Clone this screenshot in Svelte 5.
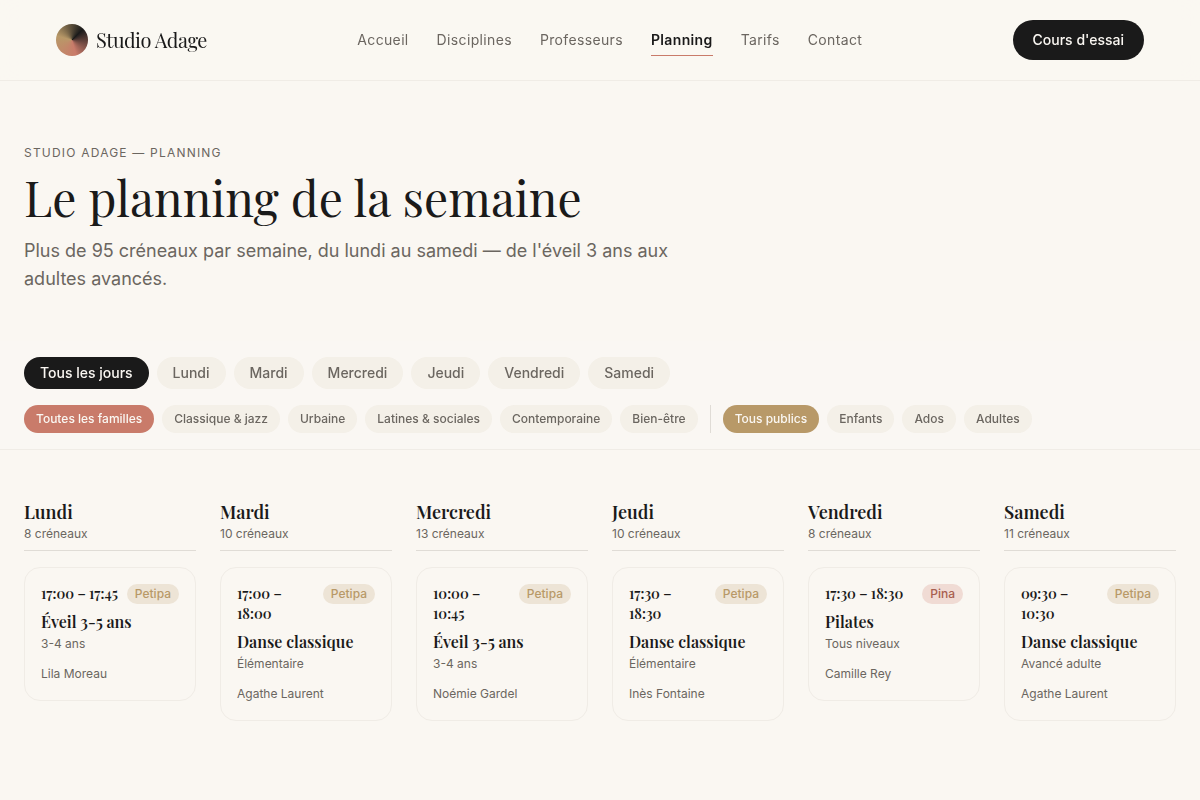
<script>
    const links = ['Accueil', 'Disciplines', 'Professeurs', 'Planning', 'Tarifs', 'Contact'];
    const jours = ['Tous les jours', 'Lundi', 'Mardi', 'Mercredi', 'Jeudi', 'Vendredi', 'Samedi'];
    const familles = ['Toutes les familles', 'Classique & jazz', 'Urbaine', 'Latines & sociales', 'Contemporaine', 'Bien-être'];
    const publics = ['Tous publics', 'Enfants', 'Ados', 'Adultes'];

    const planning = [
        { jour: 'Lundi', total: 8, debut: '17:00', fin: '17:45', salle: 'Petipa', cours: 'Éveil 3-5 ans', niveau: '3-4 ans', prof: 'Lila Moreau' },
        { jour: 'Mardi', total: 10, debut: '17:00', fin: '18:00', salle: 'Petipa', cours: 'Danse classique', niveau: 'Élémentaire', prof: 'Agathe Laurent' },
        { jour: 'Mercredi', total: 13, debut: '10:00', fin: '10:45', salle: 'Petipa', cours: 'Éveil 3-5 ans', niveau: '3-4 ans', prof: 'Noémie Gardel' },
        { jour: 'Jeudi', total: 10, debut: '17:30', fin: '18:30', salle: 'Petipa', cours: 'Danse classique', niveau: 'Élémentaire', prof: 'Inès Fontaine' },
        { jour: 'Vendredi', total: 8, debut: '17:30', fin: '18:30', salle: 'Pina', cours: 'Pilates', niveau: 'Tous niveaux', prof: 'Camille Rey' },
        { jour: 'Samedi', total: 11, debut: '09:30', fin: '10:30', salle: 'Petipa', cours: 'Danse classique', niveau: 'Avancé adulte', prof: 'Agathe Laurent' }
    ];

    let jour = $state(jours[0]);
    let famille = $state(familles[0]);
    let pub = $state(publics[0]);
    let visibles = $derived(planning.filter((p) => jour === jours[0] || p.jour === jour));
</script>

<header class="topbar">
    <a class="brand" href="#accueil">
        <span class="logo"></span>
        <span class="name">Studio Adage</span>
    </a>
    <nav>
        {#each links as link}
            <a href="#{link.toLowerCase()}" class:active={link === 'Planning'}>{link}</a>
        {/each}
    </nav>
    <a class="cta" href="#essai">Cours d'essai</a>
</header>

<main>
    <section class="hero">
        <p class="eyebrow">Studio Adage — Planning</p>
        <h1>Le planning de la semaine</h1>
        <p class="lead">Plus de 95 créneaux par semaine, du lundi au samedi — de l'éveil 3 ans aux adultes avancés.</p>
    </section>

    <section class="filters">
        <div class="row">
            {#each jours as j}
                <button class="pill" class:dark={j === jour} onclick={() => (jour = j)}>{j}</button>
            {/each}
        </div>
        <div class="row">
            {#each familles as f}
                <button class="pill small" class:rose={f === famille} onclick={() => (famille = f)}>{f}</button>
            {/each}
            <span class="sep"></span>
            {#each publics as p}
                <button class="pill small" class:gold={p === pub} onclick={() => (pub = p)}>{p}</button>
            {/each}
        </div>
    </section>

    <section class="week">
        {#each visibles as p (p.jour)}
            <div class="day">
                <div class="day-head">
                    <h2>{p.jour}</h2>
                    <p>{p.total} créneaux</p>
                </div>
                <article class="card">
                    <div class="top">
                        <span class="time">{p.debut} – {p.fin}</span>
                        <span class="room" class:pina={p.salle === 'Pina'}>{p.salle}</span>
                    </div>
                    <h3>{p.cours}</h3>
                    <p class="level">{p.niveau}</p>
                    <p class="teacher">{p.prof}</p>
                </article>
            </div>
        {/each}
    </section>
</main>

<style>
    :global(body) {
        margin: 0;
        background: #faf7f2;
        color: #1a1a1a;
        font-family: Inter, "Liberation Sans", sans-serif;
    }

    p, h1, h2, h3 {
        margin: 0;
    }

    a {
        color: inherit;
        text-decoration: none;
    }

    .topbar {
        display: flex;
        align-items: center;
        justify-content: space-between;
        height: 80px;
        padding: 0 56px;
        border-bottom: 1px solid #f0ece6;
        background: rgba(250, 247, 242, 0.9);
        backdrop-filter: blur(12px);
    }

    .brand {
        display: flex;
        align-items: center;
        gap: 8px;
    }

    .logo {
        width: 32px;
        height: 32px;
        border-radius: 50%;
        background: conic-gradient(from 45deg, #1a1a1a, #c97b6a, #b89968, #1a1a1a);
    }

    .name {
        font-family: "Playfair Display", "Liberation Serif", serif;
        font-size: 20px;
        line-height: 28px;
        letter-spacing: -0.5px;
    }

    nav {
        display: flex;
        gap: 28px;
        font-size: 14px;
        line-height: 20px;
        letter-spacing: 0.35px;
        color: #6b6660;
    }

    nav a {
        padding: 5px 0;
        border-bottom: 1px solid transparent;
    }

    nav a.active {
        color: #1a1a1a;
        font-weight: 600;
        border-color: #c97b6a;
    }

    .cta {
        padding: 10px 20px;
        border-radius: 20px;
        background: #1a1a1a;
        color: #faf7f2;
        font-size: 14px;
        line-height: 20px;
        font-weight: 500;
    }

    .hero {
        padding: 64px 24px 48px;
    }

    .eyebrow {
        font-size: 12px;
        line-height: 16px;
        letter-spacing: 1.2px;
        text-transform: uppercase;
        color: #6b6660;
    }

    h1 {
        margin: 8px 0 12px;
        font-family: "Playfair Display", "Liberation Serif", serif;
        font-size: 48px;
        line-height: 56px;
        font-weight: 400;
    }

    .lead {
        max-width: 672px;
        font-size: 18px;
        line-height: 28px;
        color: #6b6660;
    }

    .filters {
        display: flex;
        flex-direction: column;
        gap: 16px;
        padding: 16px 24px;
        border-bottom: 1px solid #f0ece6;
        background: rgba(250, 247, 242, 0.95);
        backdrop-filter: blur(8px);
    }

    .row {
        display: flex;
        gap: 8px;
    }

    .pill {
        height: 32px;
        padding: 6px 16px;
        border: 0;
        border-radius: 16px;
        background: #f4f0e8;
        color: #6b6660;
        font-family: inherit;
        font-size: 14px;
        line-height: 20px;
        font-weight: 500;
        white-space: nowrap;
        cursor: pointer;
    }

    .pill.small {
        height: 28px;
        padding: 6px 12px;
        font-size: 12px;
        line-height: 16px;
    }

    .pill.dark {
        background: #1a1a1a;
        color: #faf7f2;
    }

    .pill.rose {
        background: #c97b6a;
        color: #faf7f2;
    }

    .pill.gold {
        background: #b89968;
        color: #faf7f2;
    }

    .sep {
        width: 1px;
        margin: 0 4px;
        background: #e0dcd6;
    }

    .week {
        display: grid;
        grid-template-columns: repeat(6, 1fr);
        gap: 24px;
        align-items: start;
        padding: 48px 24px 64px;
    }

    .day-head {
        margin-bottom: 16px;
        padding-bottom: 8px;
        border-bottom: 1px solid #e0dcd6;
    }

    h2, h3, .time {
        font-family: "Playfair Display", "Liberation Serif", serif;
        font-weight: 600;
    }

    h2 {
        font-size: 18px;
        line-height: 28px;
    }

    .day-head p, .level, .teacher {
        font-size: 12px;
        line-height: 16px;
        color: #6b6660;
    }

    .card {
        padding: 16px;
        border: 1px solid #f0ece6;
        border-radius: 16px;
    }

    .top {
        display: flex;
        align-items: flex-start;
        justify-content: space-between;
        gap: 8px;
    }

    .time {
        font-size: 14px;
        line-height: 20px;
    }

    .room {
        padding: 2px 8px;
        border-radius: 10px;
        background: #ede4d6;
        color: #b89968;
        font-size: 12px;
        line-height: 16px;
        font-weight: 500;
    }

    .room.pina {
        background: #f0dbd4;
        color: #a85f50;
    }

    h3 {
        margin-top: 8px;
        font-size: 16px;
        line-height: 20px;
    }

    .level {
        margin-top: 4px;
    }

    .teacher {
        margin-top: 14px;
        padding-bottom: 2px;
    }
</style>
